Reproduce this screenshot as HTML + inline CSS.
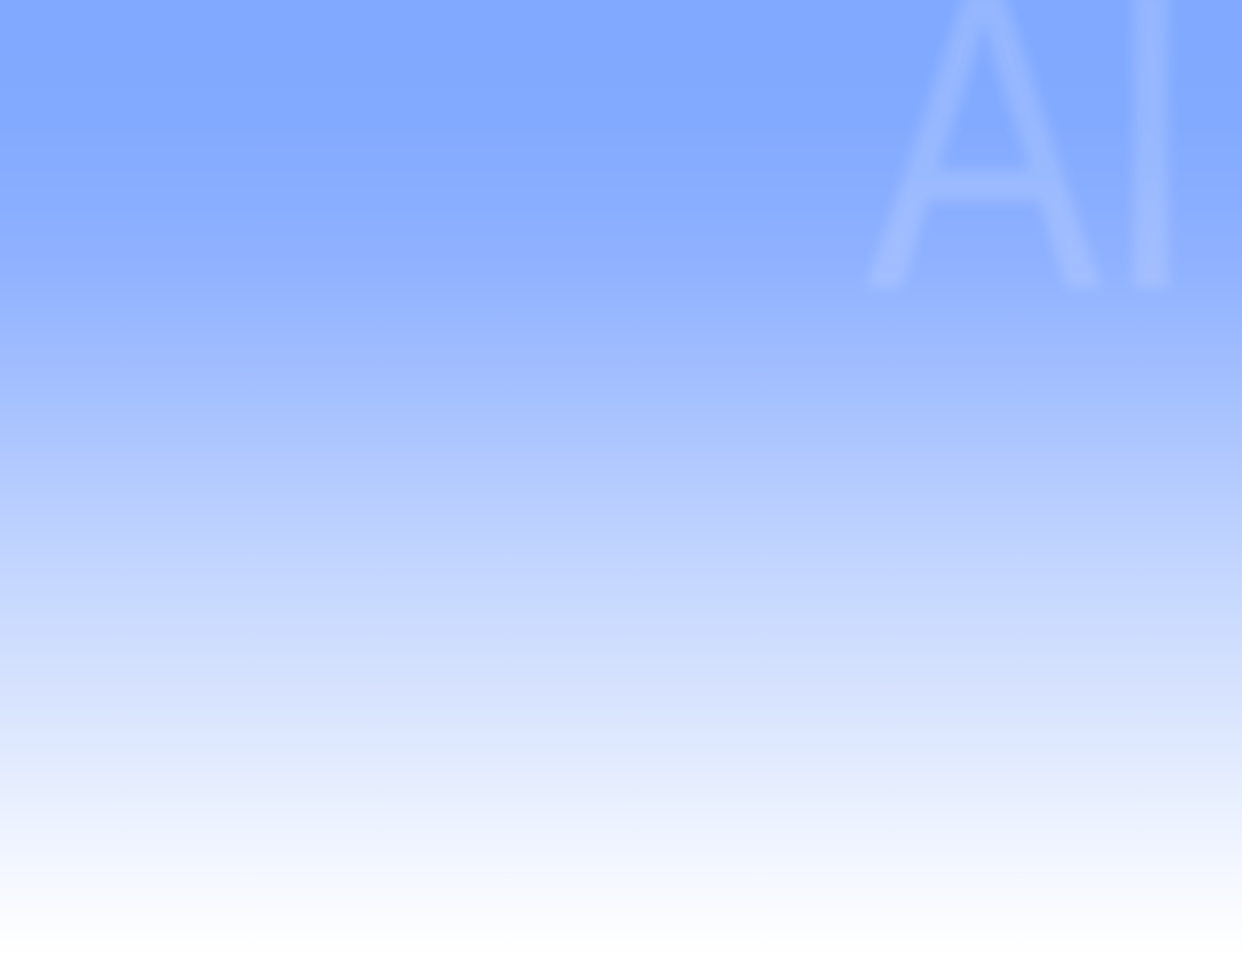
<!DOCTYPE html>
<html><head><meta charset="utf-8"><style>
html,body{margin:0;padding:0;width:1242px;height:955px;overflow:hidden}
body{background:linear-gradient(to bottom,#80a9ff 0px,#82aaff 120px,#8fb1ff 260px,#a6c1ff 400px,#c2d5ff 560px,#dbe6fe 720px,#f2f6ff 860px,#ffffff 955px);position:relative}
svg{position:absolute;left:0;top:0}
</style></head><body>
<svg width="1242" height="955" viewBox="0 0 1242 955">
<defs><filter id="b" x="-20%" y="-20%" width="140%" height="140%"><feGaussianBlur stdDeviation="6"/></filter></defs>
<g filter="url(#b)" fill="#ffffff" fill-opacity="0.16" font-family="Liberation Sans, sans-serif" font-size="430">
<text transform="translate(866,287) scale(0.82,1)" x="0" y="0">A</text>
<text transform="translate(1100,287) scale(0.85,1)" x="0" y="0">I</text>
</g>
</svg>
</body></html>
